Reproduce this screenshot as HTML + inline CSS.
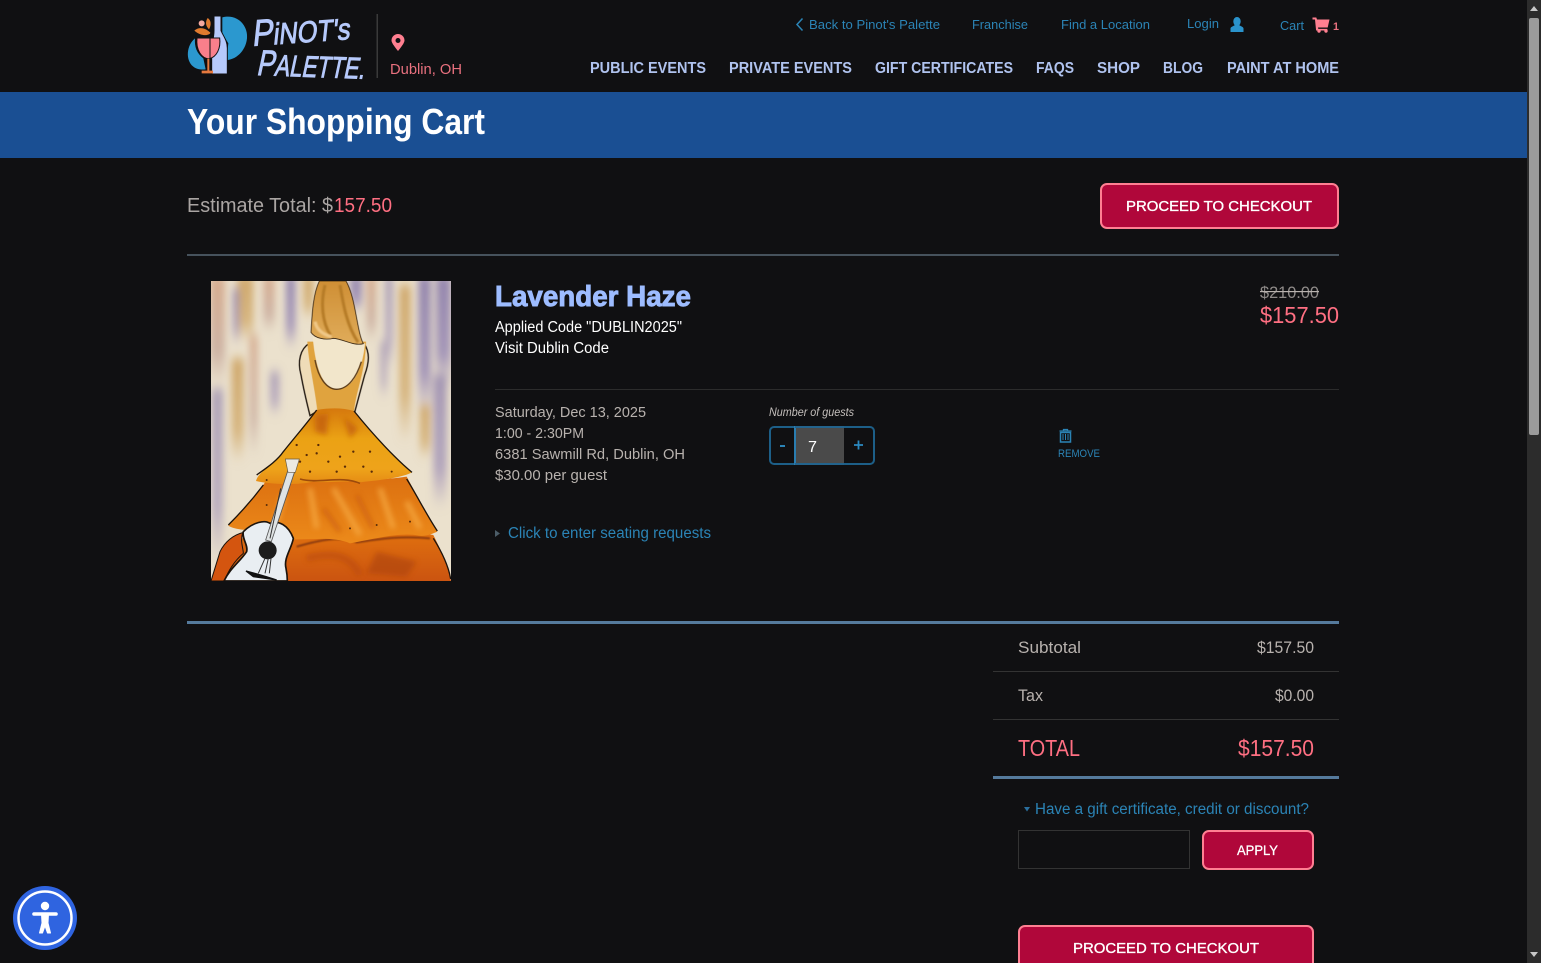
<!DOCTYPE html>
<html lang="en"><head><meta charset="utf-8"><title>Your Shopping Cart</title>
<style>
html,body{margin:0;padding:0;width:1541px;height:963px;overflow:hidden;background:#101012}
svg{display:block}
text{font-family:"Liberation Sans",sans-serif}
.top{font-size:13px;fill:#2b84b6}
.nav{font-size:16px;font-weight:bold;fill:#b0c3ef}
.d{font-size:15px;fill:#b8b2ae}
.s{font-size:17px;fill:#b8b2ae}
.btn{font-size:15px;fill:#fff;stroke:#fff;stroke-width:.35px}
</style></head><body>
<svg width="1541" height="963" viewBox="0 0 1541 963" xmlns="http://www.w3.org/2000/svg">
<defs>
<filter id="b3" filterUnits="userSpaceOnUse" x="0" y="0" width="780" height="930"><feGaussianBlur stdDeviation="8"/></filter>
<filter id="b1" filterUnits="userSpaceOnUse" x="0" y="0" width="780" height="930"><feGaussianBlur stdDeviation="2.500"/></filter>
<filter id="b4" filterUnits="userSpaceOnUse" x="0" y="0" width="780" height="930"><feGaussianBlur stdDeviation="11 16"/></filter>
<clipPath id="pc"><rect x="33" y="18" width="720" height="900"/></clipPath>
<linearGradient id="gP" x1="0" y1="0" x2="0" y2="1"><stop offset="0" stop-color="#9385ad"/><stop offset=".7" stop-color="#a597b8"/><stop offset="1" stop-color="#a597b8" stop-opacity="0"/></linearGradient>
<linearGradient id="gT" x1="0" y1="0" x2="0" y2="1"><stop offset="0" stop-color="#cfa86c"/><stop offset=".7" stop-color="#d6b57f"/><stop offset="1" stop-color="#d6b57f" stop-opacity="0"/></linearGradient>
<linearGradient id="gM" x1="0" y1="0" x2="0" y2="1"><stop offset="0" stop-color="#d5ab8e"/><stop offset=".7" stop-color="#cdb3a4"/><stop offset="1" stop-color="#cdb3a4" stop-opacity="0"/></linearGradient>
<linearGradient id="hair" x1="0" y1="0" x2="0" y2="1"><stop offset="0" stop-color="#cf8f35"/><stop offset="1" stop-color="#e0ac5a"/></linearGradient>
<linearGradient id="t1" x1="0" y1="0" x2="0" y2="1"><stop offset="0" stop-color="#d5780d"/><stop offset=".4" stop-color="#eba214"/><stop offset=".8" stop-color="#eea31a"/><stop offset="1" stop-color="#e58a14"/></linearGradient>
<linearGradient id="t2" x1="0" y1="0" x2="0" y2="1"><stop offset="0" stop-color="#dc7010"/><stop offset="1" stop-color="#ec8a1a"/></linearGradient>
<linearGradient id="t3" x1="0" y1="0" x2="0" y2="1"><stop offset="0" stop-color="#e0700f"/><stop offset="1" stop-color="#cb5410"/></linearGradient>
</defs>

<rect width="1541" height="963" fill="#101012"/>

<!-- logo -->
<g transform="translate(185 10) scale(.3333)">
<path d="M112 22C160 10 190 50 186 85C182 125 150 150 124 150L130 100L112 70Z" fill="#2b98cf"/>
<path d="M30 85C5 105 0 150 25 170C40 182 60 178 62 178L55 145C35 130 28 110 30 85Z" fill="#2b98cf"/>
<path d="M87 18H108V62C116 80 127 92 127 115V192H80V115C80 100 87 85 87 62Z" fill="#b6c9fb" stroke="#101012" stroke-width="3"/>
<path d="M36 84H104C108 115 95 142 72 146C50 146 32 120 36 84Z" fill="#f97f8b" stroke="#101012" stroke-width="3"/>
<path d="M67 146H73V182H84V190H50V182H67Z" fill="#e5793f"/>
<path d="M28 62C40 50 60 52 76 68C76 76 50 82 28 62Z" fill="#e07a2e"/>
<path d="M68 24C78 30 80 44 72 58C62 48 60 36 68 24Z" fill="#e07a2e"/>
<circle cx="50" cy="40" r="9" fill="#f4a9a0"/>
<path d="M75 84V146" stroke="#101012" stroke-width="3"/>
</g>
<g fill="#b6c9fb" stroke="#b6c9fb" stroke-width=".9">
<text transform="translate(252 46) rotate(-4) skewX(-10)" font-size="30" textLength="98" lengthAdjust="spacingAndGlyphs"><tspan font-size="37">P</tspan>iNOT's</text>
<text transform="translate(256 75) rotate(2) skewX(-10)" font-size="30" textLength="108" lengthAdjust="spacingAndGlyphs"><tspan font-size="36">P</tspan>ALETTE.</text>
</g>
<rect x="376.500" y="14" width="1.500" height="64" fill="#3a3a3a"/>
<path d="M398 51C393 45 391.500 42 391.500 40.500A6.500 6.500 0 0 1 404.500 40.500C404.500 42 403 45 398 51Z" fill="#ff7f90"/>
<circle cx="398" cy="40.500" r="2.500" fill="#101012"/>
<text x="390" y="74" font-size="15" fill="#e9717f" textLength="72" lengthAdjust="spacingAndGlyphs">Dublin, OH</text>

<!-- top links -->
<path d="M802.500 18.500L797 24.500L802.500 30.500" fill="none" stroke="#2b84b6" stroke-width="1.500"/>
<text class="top" x="809" y="29" textLength="131" lengthAdjust="spacingAndGlyphs">Back to Pinot's Palette</text>
<text class="top" x="972" y="29" textLength="56" lengthAdjust="spacingAndGlyphs">Franchise</text>
<text class="top" x="1061" y="29" textLength="89" lengthAdjust="spacingAndGlyphs">Find a Location</text>
<text class="top" x="1187" y="28" textLength="32" lengthAdjust="spacingAndGlyphs">Login</text>
<path d="M1237 17a3.700 4.200 0 0 1 3.700 4.200c0 2-1 3.200-1.400 4 1.800 1 4.200 1.800 4.200 3.300V32h-13v-3.500c0-1.500 2.400-2.300 4.200-3.300-.4-.8-1.400-2-1.400-4A3.700 4.200 0 0 1 1237 17Z" fill="#2a93cc"/>
<text class="top" x="1280" y="30" textLength="24" lengthAdjust="spacingAndGlyphs">Cart</text>
<path d="M1312.500 17.500h3.800l.7 2H1329.500l-1.800 8h-9.700l.3 1.400h9v1.600h-11.200L1315 19.500h-2.500Z" fill="#ff7f90"/>
<circle cx="1319" cy="31" r="1.700" fill="#ff7f90"/><circle cx="1326" cy="31" r="1.700" fill="#ff7f90"/>
<text x="1333" y="30" font-size="11" font-weight="bold" fill="#e9717f" textLength="6" lengthAdjust="spacingAndGlyphs">1</text>

<!-- nav -->
<text class="nav" x="590" y="73" textLength="116" lengthAdjust="spacingAndGlyphs">PUBLIC EVENTS</text>
<text class="nav" x="729" y="73" textLength="123" lengthAdjust="spacingAndGlyphs">PRIVATE EVENTS</text>
<text class="nav" x="875" y="73" textLength="138" lengthAdjust="spacingAndGlyphs">GIFT CERTIFICATES</text>
<text class="nav" x="1036" y="73" textLength="38" lengthAdjust="spacingAndGlyphs">FAQS</text>
<text class="nav" x="1097" y="73" textLength="43" lengthAdjust="spacingAndGlyphs">SHOP</text>
<text class="nav" x="1163" y="73" textLength="40" lengthAdjust="spacingAndGlyphs">BLOG</text>
<text class="nav" x="1227" y="73" textLength="112" lengthAdjust="spacingAndGlyphs">PAINT AT HOME</text>

<!-- banner -->
<rect x="0" y="92" width="1527" height="66" fill="#1a4f93"/>
<text x="187" y="134" font-size="36" font-weight="bold" fill="#fff" textLength="298" lengthAdjust="spacingAndGlyphs">Your Shopping Cart</text>

<!-- estimate -->
<text x="187" y="212" font-size="20" fill="#aaa5a3" textLength="146" lengthAdjust="spacingAndGlyphs">Estimate Total: $</text>
<text x="334" y="212" font-size="20" fill="#ff6f82" textLength="58" lengthAdjust="spacingAndGlyphs">157.50</text>
<rect x="1101" y="184" width="237" height="44" rx="6" fill="#b0073a" stroke="#ff7f92" stroke-width="2"/>
<text class="btn" x="1126" y="211" textLength="186" lengthAdjust="spacingAndGlyphs">PROCEED TO CHECKOUT</text>
<rect x="187" y="254" width="1152" height="2" fill="#46525c"/>

<!-- painting -->
<svg x="200" y="275" width="260" height="310" viewBox="0 0 780 930">
<g clip-path="url(#pc)">
<rect x="33" y="18" width="720" height="900" fill="#ebe1cd"/>
<g filter="url(#b4)">
<rect x="30" y="0" width="45" height="330" fill="url(#gM)"/>
<rect x="112" y="0" width="48" height="200" fill="url(#gT)"/>
<rect x="95" y="250" width="36" height="310" fill="url(#gT)"/>
<rect x="190" y="0" width="34" height="170" fill="url(#gM)"/>
<rect x="258" y="0" width="28" height="220" fill="url(#gP)"/>
<rect x="310" y="0" width="30" height="130" fill="url(#gT)"/>
<rect x="100" y="40" width="16" height="170" fill="url(#gP)"/>
<rect x="150" y="180" width="22" height="360" fill="url(#gM)"/>
<rect x="35" y="340" width="34" height="520" fill="url(#gP)" opacity=".7"/>
<rect x="210" y="290" width="28" height="130" fill="url(#gP)" opacity=".7"/>
<rect x="450" y="0" width="36" height="110" fill="url(#gP)"/>
<rect x="500" y="0" width="28" height="200" fill="url(#gM)"/>
<rect x="555" y="0" width="24" height="280" fill="url(#gP)" opacity=".7"/>
<rect x="598" y="30" width="34" height="470" fill="url(#gT)"/>
<rect x="655" y="0" width="38" height="420" fill="url(#gP)"/>
<rect x="708" y="0" width="45" height="340" fill="url(#gP)"/>
<rect x="700" y="300" width="40" height="400" fill="url(#gP)" opacity=".8"/>
<rect x="660" y="390" width="30" height="160" fill="url(#gT)"/>
<rect x="540" y="200" width="22" height="170" fill="url(#gP)" opacity=".6"/>
</g>
<!-- arms -->
<path d="M328 205C300 222 292 260 303 300C312 350 322 390 330 422L356 405L356 230Z" fill="#efdcb8" stroke="#1c130c" stroke-width="4"/>
<path d="M492 205C510 232 508 262 494 300L464 412L440 400L450 230Z" fill="#efdcb8" stroke="#1c130c" stroke-width="4"/>
<!-- bodice -->
<path d="M322 200H498C496 290 470 340 462 408H352C345 340 325 260 322 200Z" fill="#e0a33e"/>
<!-- back -->
<path d="M338 185L495 205C490 260 470 340 410 343C365 340 345 270 338 185Z" fill="#f2e6cb"/>
<path d="M345 255C355 310 380 342 410 343C445 342 470 305 484 260" fill="none" stroke="#5a3a18" stroke-width="4"/>
<!-- hair -->
<path d="M358 18C338 60 336 125 333 172C345 190 375 196 400 190C430 192 460 214 490 206C470 170 468 70 438 18Z" fill="url(#hair)" stroke="#3a2712" stroke-width="2.500"/>
<path d="M375 30C362 80 365 140 392 182M420 30C430 90 440 150 474 202" stroke="#b67c28" stroke-width="9" fill="none" filter="url(#b1)"/>
<path d="M345 140C350 165 370 180 395 185" stroke="#f0c888" stroke-width="10" fill="none" filter="url(#b1)"/>
<!-- tier 3 -->
<path d="M125 790C80 800 50 860 33 918H753C745 870 720 820 700 780C600 760 500 790 400 780C300 770 200 780 125 790Z" fill="url(#t3)"/>
<path d="M290 815C360 795 420 782 470 802C540 792 600 782 690 790" stroke="#8c3a0c" stroke-width="6" fill="none" filter="url(#b1)"/>
<path d="M700 790C725 830 745 870 752 912" stroke="#1c130c" stroke-width="4" fill="none"/>
<path d="M530 830L650 860L620 905L500 895Z" fill="#a8400c" opacity=".55" filter="url(#b3)"/>
<path d="M320 850C400 830 450 840 480 900" stroke="#b94a0e" stroke-width="22" fill="none" opacity=".6" filter="url(#b3)"/>
<!-- tier 2 -->
<path d="M195 622C170 660 125 710 85 752C110 770 170 760 250 790C320 800 390 780 450 805C530 790 610 770 655 782C680 785 700 775 712 770C680 720 650 660 620 605C500 625 350 600 195 622Z" fill="url(#t2)"/>
<path d="M620 612C650 660 680 720 712 768" stroke="#1c130c" stroke-width="4" fill="none"/>
<path d="M190 630C160 670 125 710 85 750" stroke="#1c130c" stroke-width="4" fill="none"/>
<path d="M400 640L480 780M540 640L580 760M330 640L350 760M250 660L230 740M620 680L660 760" stroke="#f7ac45" stroke-width="16" fill="none" filter="url(#b3)" opacity=".75"/>
<path d="M370 700L420 770M470 660L520 760" stroke="#c6560c" stroke-width="14" fill="none" filter="url(#b3)" opacity=".6"/>
<!-- tier 1 -->
<path d="M350 405C390 398 430 398 462 408C520 480 590 555 636 592C600 610 540 615 480 622C430 615 380 625 340 620C300 630 220 630 168 618C175 590 220 570 250 530C290 480 325 440 350 405Z" fill="url(#t1)"/>
<path d="M462 408C520 480 590 555 636 592M350 405C325 440 290 480 250 530C230 560 190 585 170 600" stroke="#1c130c" stroke-width="4" fill="none"/>
<path d="M345 420L385 415L380 480L345 470ZM430 425L475 460L450 490Z" fill="#c5620c" opacity=".85" filter="url(#b3)"/>
<path d="M480 625C420 600 360 628 300 612" stroke="#9c4a0b" stroke-width="5" fill="none"/>
<g fill="#5a2c08">
<circle cx="290" cy="510" r="3.500"/><circle cx="320" cy="540" r="3.500"/><circle cx="350" cy="535" r="3.500"/><circle cx="385" cy="560" r="3.500"/><circle cx="420" cy="545" r="3.500"/><circle cx="435" cy="575" r="3.500"/><circle cx="490" cy="575" r="3.500"/><circle cx="515" cy="590" r="3.500"/><circle cx="355" cy="510" r="3.500"/><circle cx="300" cy="560" r="3.500"/><circle cx="410" cy="590" r="3.500"/><circle cx="460" cy="530" r="3.500"/><circle cx="330" cy="590" r="3.500"/><circle cx="510" cy="530" r="3.500"/><circle cx="200" cy="615" r="3"/><circle cx="575" cy="590" r="3"/><circle cx="450" cy="760" r="3"/><circle cx="530" cy="750" r="3"/><circle cx="630" cy="740" r="3"/><circle cx="200" cy="690" r="3"/>
</g>
<!-- guitar -->
<path d="M33 918L60 830C75 800 100 780 128 773C120 800 130 820 130 835C100 860 85 890 72 918Z" fill="#d4550f" stroke="#1c130c" stroke-width="3"/>
<path d="M130 770C160 740 195 735 210 745C235 735 265 750 280 790C275 820 250 850 258 880C262 900 262 918 262 918H72C90 880 120 860 140 830C145 810 125 790 130 770Z" fill="#e9eef2" stroke="#1c130c" stroke-width="5"/>
<path d="M264 585L284 590L214 800L197 795Z" fill="#dfe3e4" stroke="#555" stroke-width="2.500"/>
<path d="M256 552H298L286 592H264Z" fill="#ece9e2" stroke="#6a5a40" stroke-width="2"/>
<path d="M242 640L210 790" stroke="#333" stroke-width="3" fill="none"/>
<circle cx="203" cy="826" r="27" fill="#1c1c1c"/>
<path d="M195 850L175 895M205 850L195 895M213 850L208 895" stroke="#333" stroke-width="3"/>
<path d="M138 888C165 895 200 905 230 915L160 905Z" fill="#111" stroke="#111" stroke-width="4"/>
</g>
</svg>

<!-- item -->
<text x="495" y="306" font-size="29" font-weight="bold" fill="#9dbcff" stroke="#9dbcff" stroke-width=".9" textLength="196" lengthAdjust="spacingAndGlyphs">Lavender Haze</text>
<text x="495" y="332" font-size="15.500" fill="#fff" textLength="187" lengthAdjust="spacingAndGlyphs">Applied Code "DUBLIN2025"</text>
<text x="495" y="353" font-size="15.500" fill="#fff" textLength="114" lengthAdjust="spacingAndGlyphs">Visit Dublin Code</text>
<text x="1260" y="298" font-size="17" fill="#8f8b89" textLength="59" lengthAdjust="spacingAndGlyphs">$210.00</text>
<rect x="1260" y="291" width="59" height="1.200" fill="#b8b2ae"/>
<text x="1260" y="323" font-size="23" fill="#ff6f82" textLength="79" lengthAdjust="spacingAndGlyphs">$157.50</text>
<rect x="495" y="389" width="844" height="1" fill="#2c2c2c"/>

<text class="d" x="495" y="417" textLength="151" lengthAdjust="spacingAndGlyphs">Saturday, Dec 13, 2025</text>
<text class="d" x="495" y="438" textLength="89" lengthAdjust="spacingAndGlyphs">1:00 - 2:30PM</text>
<text class="d" x="495" y="459" textLength="190" lengthAdjust="spacingAndGlyphs">6381 Sawmill Rd, Dublin, OH</text>
<text class="d" x="495" y="480" textLength="112" lengthAdjust="spacingAndGlyphs">$30.00 per guest</text>

<text x="769" y="416" font-size="11.500" font-style="italic" fill="#c4bfbc" textLength="85" lengthAdjust="spacingAndGlyphs">Number of guests</text>
<rect x="770" y="427" width="104" height="37" rx="4" fill="#101012" stroke="#1d5f88" stroke-width="2"/>
<rect x="795" y="427" width="49" height="37" fill="#4a4a4a"/>
<rect x="794" y="426" width="2" height="39" fill="#2a7db0"/>
<rect x="795" y="426" width="49" height="2" fill="#23638c"/><rect x="795" y="463" width="49" height="2" fill="#23638c"/>
<text x="808" y="452" font-size="16" fill="#fff" textLength="9" lengthAdjust="spacingAndGlyphs">7</text>
<rect x="780" y="445" width="5" height="2" fill="#2b84b6"/>
<path d="M854 445h9M858.500 440.500v9" stroke="#2b8ac2" stroke-width="1.800"/>

<path d="M1059.500 431h12M1063.500 431v-1.500h4V431" stroke="#2b84b6" stroke-width="1.300" fill="none"/>
<path d="M1060.500 432.500h10v9.500h-10Z" fill="none" stroke="#2b84b6" stroke-width="1.500"/>
<path d="M1063 434v6M1065.500 434v6M1068 434v6" stroke="#2b84b6" stroke-width="1"/>
<text x="1058" y="457" font-size="11" fill="#2b84b6" textLength="42" lengthAdjust="spacingAndGlyphs">REMOVE</text>

<path d="M495 530v7l5-3.500Z" fill="#4c5d68"/>
<text x="508" y="538" font-size="15.500" fill="#2b84b6" textLength="203" lengthAdjust="spacingAndGlyphs">Click to enter seating requests</text>

<rect x="187" y="621" width="1152" height="3" fill="#557a9c"/>

<!-- totals -->
<text class="s" x="1018" y="653" textLength="63" lengthAdjust="spacingAndGlyphs">Subtotal</text>
<text class="s" x="1257" y="653" textLength="57" lengthAdjust="spacingAndGlyphs">$157.50</text>
<rect x="993" y="671" width="346" height="1" fill="#333"/>
<text class="s" x="1018" y="701" textLength="25" lengthAdjust="spacingAndGlyphs">Tax</text>
<text class="s" x="1275" y="701" textLength="39" lengthAdjust="spacingAndGlyphs">$0.00</text>
<rect x="993" y="719" width="346" height="1" fill="#333"/>
<text x="1018" y="756" font-size="23" fill="#ff6f82" textLength="62" lengthAdjust="spacingAndGlyphs">TOTAL</text>
<text x="1238" y="756" font-size="23" fill="#ff6f82" textLength="76" lengthAdjust="spacingAndGlyphs">$157.50</text>
<rect x="993" y="776" width="346" height="3" fill="#557a9c"/>

<path d="M1024 807h6l-3 4.500Z" fill="#2a6f9e"/>
<text x="1035" y="814" font-size="15.500" fill="#2b84b6" textLength="274" lengthAdjust="spacingAndGlyphs">Have a gift certificate, credit or discount?</text>
<rect x="1018.500" y="830.500" width="171" height="38" fill="#101012" stroke="#333"/>
<rect x="1203" y="831" width="110" height="38" rx="6" fill="#b0073a" stroke="#ff7f92" stroke-width="2"/>
<text x="1237" y="855" font-size="14" fill="#fff" stroke="#fff" stroke-width=".3" textLength="41" lengthAdjust="spacingAndGlyphs">APPLY</text>
<rect x="1019" y="926" width="294" height="60" rx="6" fill="#b0073a" stroke="#ff7f92" stroke-width="2"/>
<text class="btn" x="1073" y="953" textLength="186" lengthAdjust="spacingAndGlyphs">PROCEED TO CHECKOUT</text>

<!-- accessibility -->
<circle cx="45" cy="918" r="32" fill="#2f64e0"/>
<circle cx="45" cy="918" r="26.500" fill="none" stroke="#fff" stroke-width="2.500"/>
<circle cx="45" cy="906" r="4.200" fill="#fff"/>
<path d="M34 914H56" stroke="#fff" stroke-width="3.600" stroke-linecap="round"/>
<path d="M41.500 914H48.500L48 923L50.500 933H47.500L45 926L42.500 933H39.500L42 923Z" fill="#fff" stroke="#fff" stroke-width="1" stroke-linejoin="round"/>

<!-- scrollbar -->
<rect x="1527" y="0" width="14" height="963" fill="#2c2c2c"/>
<rect x="1529" y="18" width="10" height="417" rx="2" fill="#9b9b9b"/>
<path d="M1534 6l4 5h-8Z" fill="#c8c8c8"/>
<path d="M1530 952h8l-4 5Z" fill="#c8c8c8"/>
</svg>
</body></html>
